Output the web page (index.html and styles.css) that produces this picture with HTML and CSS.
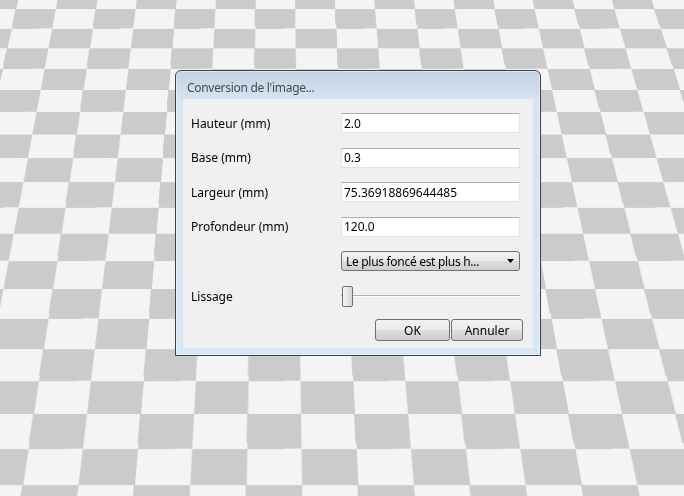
FILE: index.html
```
<!DOCTYPE html>
<html>
<head>
    <title>Conversion de l'image</title>
    <meta charset="UTF-8">
    <meta name="viewport" content="width=device-width, initial-scale=1.0">
    <link rel="stylesheet" href="styles.css">
</head>
<body>
    <div class="desk">
        <div class="floor"></div>

        <div class="dialog">
            <div class="title">Conversion de l'image...</div>
            <div class="panel">
                <label>Hauteur (mm)</label>
                <input type="text" value="2.0">

                <label>Base (mm)</label>
                <input type="text" value="0.3">

                <label>Largeur (mm)</label>
                <input type="text" value="75.36918869644485">

                <label>Profondeur (mm)</label>
                <input type="text" value="120.0">

                <span></span>
                <div class="combo">
                    <span>Le plus foncé est plus h...</span>
                    <svg width="7" height="4" viewBox="0 0 7 4"><path d="M0 0h7L3.5 4z" fill="#000"/></svg>
                </div>

                <label>Lissage</label>
                <div class="slider"><div class="thumb"></div></div>

                <div class="buttons">
                    <button class="btn ok">OK</button>
                    <button class="btn cancel">Annuler</button>
                </div>
            </div>
        </div>
    </div>
</body>
</html>
```

FILE: styles.css
```
* {
    box-sizing: border-box;
    margin: 0;
    padding: 0;
}

body {
    font-family: "Noto Sans", "DejaVu Sans", sans-serif;
    font-size: 12px;
    background: #f4f4f4;
}

.desk {
    position: relative;
    width: 684px;
    height: 496px;
    overflow: hidden;
    background: #f4f4f4;
    perspective: 2069px;
    perspective-origin: 278px 248px;
}

/* build plate, tilted away from the camera */
.floor {
    position: absolute;
    left: -700px;
    bottom: 0;
    width: 2100px;
    height: 1300px;
    background: repeating-conic-gradient(#cbcbcb 0 25%, #f4f4f4 0 50%) 102.25px 46px / 112.5px 112.5px;
    transform-origin: 50% 100%;
    transform: rotateX(55.4deg);
}

.dialog {
    position: absolute;
    left: 175px;
    top: 70px;
    z-index: 1;
    width: 366px;
    height: 286px;
    display: flex;
    flex-direction: column;
    padding: 0 7px 7px;
    border: 1px solid #39434e;
    border-radius: 6px 6px 0 0;
    background: linear-gradient(#c2d2e2, #d8e4f0 30px, #d9e6f3);
    box-shadow: inset 0 0 0 1px rgba(255,255,255,0.45);
}

.title {
    height: 28px;
    padding: 4px 0 0 4px;
    line-height: 25px;
    letter-spacing: -0.3px;
    color: #414c58;
}

.panel {
    flex: 1;
    display: grid;
    grid-template-columns: 150px 179px;
    grid-auto-rows: min-content;
    row-gap: 14.5px;
    padding: 13px 12px 0 7px;
    background: #f0f0f0;
    border: 1px solid #e9eff6;
}

label {
    align-self: center;
    color: #000;
}

input {
    height: 20px;
    padding: 0 2px;
    font: inherit;
    color: #000;
    background: #fff;
    border: 1px solid #e2e3ea;
    border-top-color: #abadb3;
    outline: none;
}

.combo {
    height: 20px;
    display: flex;
    align-items: center;
    justify-content: space-between;
    padding: 0 5px 0 4px;
    letter-spacing: -0.3px;
    border: 1px solid #707070;
    border-radius: 3px;
    background: linear-gradient(#f2f2f2, #ebebeb 50%, #dddddd 50%, #cfcfcf);
}

.slider {
    height: 21px;
    padding-left: 1px;
    background:
        linear-gradient(#b0b0b0, #b0b0b0) 0 9px / 100% 1px no-repeat,
        linear-gradient(#ffffff, #ffffff) 0 10px / 100% 1px no-repeat;
}

.thumb {
    width: 11px;
    height: 21px;
    border: 1px solid #707070;
    border-radius: 2px;
    background: linear-gradient(90deg, #f4f4f4, #e6e6e6 50%, #d6d6d6);
}

.buttons {
    grid-column: 1 / 3;
    display: flex;
    justify-content: flex-end;
    gap: 1px;
    margin: -2px -3px 0 0;
}

.btn {
    height: 22px;
    font: inherit;
    color: #000;
    border: 1px solid #707070;
    border-radius: 3px;
    background: linear-gradient(#f2f2f2, #ebebeb 50%, #dddddd 50%, #cfcfcf);
}

.ok {
    width: 75px;
}

.cancel {
    width: 72px;
}
```
